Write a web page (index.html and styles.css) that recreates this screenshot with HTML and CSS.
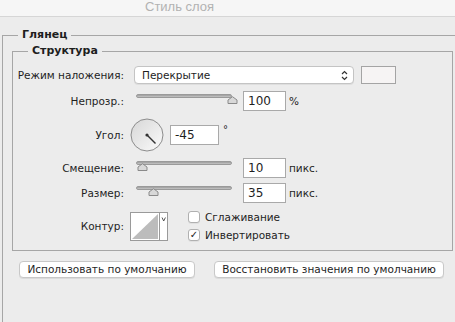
FILE: index.html
```html
<!DOCTYPE html>
<html lang="ru">
<head>
    <meta charset="UTF-8" />
    <meta name="viewport" content="width=device-width, initial-scale=1.0"/>
    <title>Стиль слоя</title>
    <link rel="stylesheet" href="styles.css">
</head>
<body>
    <header class="titlebar">
        <span class="title">Стиль слоя</span>
    </header>

    <section class="group group-outer">
        <div class="legend">Глянец</div>

        <section class="group group-inner">
            <div class="legend">Структура</div>

            <div class="row row-blend">
                <div class="label">Режим наложения:</div>
                <div class="select">
                    <span>Перекрытие</span>
                    <svg class="select-arrows" width="7" height="11" viewBox="0 0 7 11">
                        <path d="M1 4 L3.5 1.5 L6 4 M1 7 L3.5 9.5 L6 7" fill="none" stroke="#333" stroke-width="1.2"/>
                    </svg>
                </div>
                <div class="swatch"></div>
            </div>

            <div class="row row-opacity">
                <div class="label">Непрозр.:</div>
                <div class="slider">
                    <div class="track"></div>
                    <svg class="knob" style="left: 91px" width="11" height="8" viewBox="0 0 11 8">
                        <path d="M1 7.5 L1 4 L5.5 0.7 L10 4 L10 7.5 Z" fill="#d8d8d8" stroke="#8a8a8a"/>
                    </svg>
                </div>
                <div class="field field-num">100</div>
                <span class="unit">%</span>
            </div>

            <div class="row row-angle">
                <div class="label">Угол:</div>
                <svg class="dial" width="34" height="34" viewBox="0 0 34 34">
                    <defs>
                        <linearGradient id="dialFill" x1="0" y1="0" x2="1" y2="1">
                            <stop offset="0" stop-color="#d6d6d6"/>
                            <stop offset="1" stop-color="#fbfbfb"/>
                        </linearGradient>
                    </defs>
                    <circle cx="17" cy="17" r="16" fill="url(#dialFill)" stroke="#8c8c8c"/>
                    <circle cx="17" cy="17" r="1.6" fill="#333"/>
                    <line x1="17" y1="17" x2="25.5" y2="25.5" stroke="#333" stroke-width="1.4"/>
                </svg>
                <div class="field field-angle">-45</div>
                <span class="unit unit-deg">°</span>
            </div>

            <div class="row row-offset">
                <div class="label">Смещение:</div>
                <div class="slider">
                    <div class="track"></div>
                    <svg class="knob" style="left: 1px" width="11" height="8" viewBox="0 0 11 8">
                        <path d="M1 7.5 L1 4 L5.5 0.7 L10 4 L10 7.5 Z" fill="#d8d8d8" stroke="#8a8a8a"/>
                    </svg>
                </div>
                <div class="field field-num">10</div>
                <span class="unit">пикс.</span>
            </div>

            <div class="row row-size">
                <div class="label">Размер:</div>
                <div class="slider">
                    <div class="track"></div>
                    <svg class="knob" style="left: 12px" width="11" height="8" viewBox="0 0 11 8">
                        <path d="M1 7.5 L1 4 L5.5 0.7 L10 4 L10 7.5 Z" fill="#d8d8d8" stroke="#8a8a8a"/>
                    </svg>
                </div>
                <div class="field field-num">35</div>
                <span class="unit">пикс.</span>
            </div>

            <div class="row row-contour">
                <div class="label">Контур:</div>
                <svg class="contour" width="38" height="29" viewBox="0 0 38 29">
                    <rect x="0.5" y="0.5" width="37" height="28" fill="#fff" stroke="#9a9a9a"/>
                    <polygon points="2,27 28,2 28,27" fill="#bcbcbc"/>
                    <line x1="29.5" y1="1" x2="29.5" y2="28" stroke="#9a9a9a"/>
                    <path d="M32 5.5 L33.7 9 L35.4 5.5" fill="none" stroke="#444" stroke-width="0.9"/>
                </svg>
                <div class="checks">
                    <div class="check">
                        <span class="box"></span>
                        <span>Сглаживание</span>
                    </div>
                    <div class="check">
                        <span class="box box-checked">✓</span>
                        <span>Инвертировать</span>
                    </div>
                </div>
            </div>
        </section>

        <div class="buttons">
            <div class="button button-default">Использовать по умолчанию</div>
            <div class="button button-reset">Восстановить значения по умолчанию</div>
        </div>
    </section>
</body>
</html>
```

FILE: styles.css
```css
body {
    margin: 0;
    background-color: #ececec;
    font-family: "DejaVu Sans", "Liberation Sans", sans-serif;
    font-size: 10.5px;
    color: #1e1e1e;
    height: 322px;
    overflow: hidden;
}

.titlebar {
    height: 16px;
    background-color: #f6f6f6;
    border-bottom: 1px solid #d6d6d6;
    padding-left: 145px;
}

.title {
    font-family: "Liberation Sans", sans-serif;
    font-size: 13px;
    line-height: 14px;
    color: #b2b2b2;
}

.group {
    display: flex;
    flex-direction: column;
    border: 1px solid #a6a6a6;
}

.group-outer {
    margin: 18px 0 0 2px;
    border-right: none;
    border-bottom: none;
    height: 300px;
}

.group-inner {
    margin: 9px 0 0 9px;
    width: 441px;
    box-sizing: border-box;
    padding-bottom: 10px;
}

.legend {
    align-self: flex-start;
    margin: -8px 0 0 15px;
    padding: 0 4px;
    line-height: 14px;
    font-size: 11px;
    font-weight: bold;
    background-color: #ececec;
}

.row {
    display: flex;
    align-items: center;
    white-space: nowrap;
}

.label {
    width: 111px;
    text-align: right;
    flex-shrink: 0;
}

.row-blend {
    margin-top: 8px;
    height: 18px;
}

.row-opacity {
    margin-top: 7px;
    height: 20px;
}

.row-angle {
    margin-top: 7px;
    height: 33px;
}

.row-offset {
    margin-top: 7px;
    height: 20px;
}

.row-size {
    margin-top: 5px;
    height: 20px;
}

.row-contour {
    margin-top: 9px;
    height: 28px;
}

.select {
    margin-left: 10px;
    width: 220px;
    height: 18px;
    box-sizing: border-box;
    background-color: #fff;
    border: 1px solid #c4c4c4;
    border-radius: 4px;
    box-shadow: 0 1px 0 rgba(0, 0, 0, 0.06);
    display: flex;
    align-items: center;
    justify-content: space-between;
    padding: 0 5px 0 7px;
}

.select-arrows {
    display: block;
}

.swatch {
    margin-left: 7px;
    width: 35px;
    height: 18px;
    box-sizing: border-box;
    background-color: #f6f4f4;
    border: 1px solid #a4a4a4;
}

.slider {
    position: relative;
    margin: 0 0 4px 12px;
    width: 96px;
    height: 10px;
}

.track {
    height: 4px;
    background: linear-gradient(#9c9c9c, #c6c6c6);
    border: 1px solid #9a9a9a;
    border-radius: 3px;
    box-sizing: border-box;
}

.knob {
    position: absolute;
    top: 2px;
    display: block;
}

.field {
    height: 20px;
    box-sizing: border-box;
    background-color: #fff;
    border: 1px solid #a9a9a9;
    padding: 0 4px;
    font-size: 12px;
    line-height: 18px;
}

.field-num {
    margin-left: 11px;
    width: 43px;
}

.field-angle {
    margin-left: 6px;
    width: 49px;
}

.unit {
    margin-left: 3px;
}

.unit-deg {
    align-self: flex-start;
    margin: 6px 0 0 4px;
    font-size: 10px;
}

.dial {
    display: block;
    margin-left: 6px;
}

.contour {
    display: block;
    margin-left: 6px;
}

.checks {
    margin-left: 20px;
    display: flex;
    flex-direction: column;
    gap: 6px;
}

.check {
    display: flex;
    align-items: center;
    gap: 5px;
    height: 12px;
}

.box {
    width: 12px;
    height: 12px;
    box-sizing: border-box;
    background-color: #fff;
    border: 1px solid #b0b0b0;
    border-radius: 3px;
    box-shadow: 0 1px 0 rgba(0, 0, 0, 0.05);
    display: flex;
    justify-content: center;
    align-items: center;
    font-size: 10px;
    line-height: 10px;
    color: #222;
}

.buttons {
    display: flex;
    gap: 19px;
    margin: 10px 0 0 16px;
}

.button {
    height: 17px;
    box-sizing: border-box;
    background-color: #fff;
    border: 1px solid #c8c8c8;
    border-radius: 4px;
    box-shadow: 0 1px 0 rgba(0, 0, 0, 0.07);
    text-align: center;
    line-height: 15px;
}

.button-default {
    width: 176px;
}

.button-reset {
    width: 230px;
}
```
